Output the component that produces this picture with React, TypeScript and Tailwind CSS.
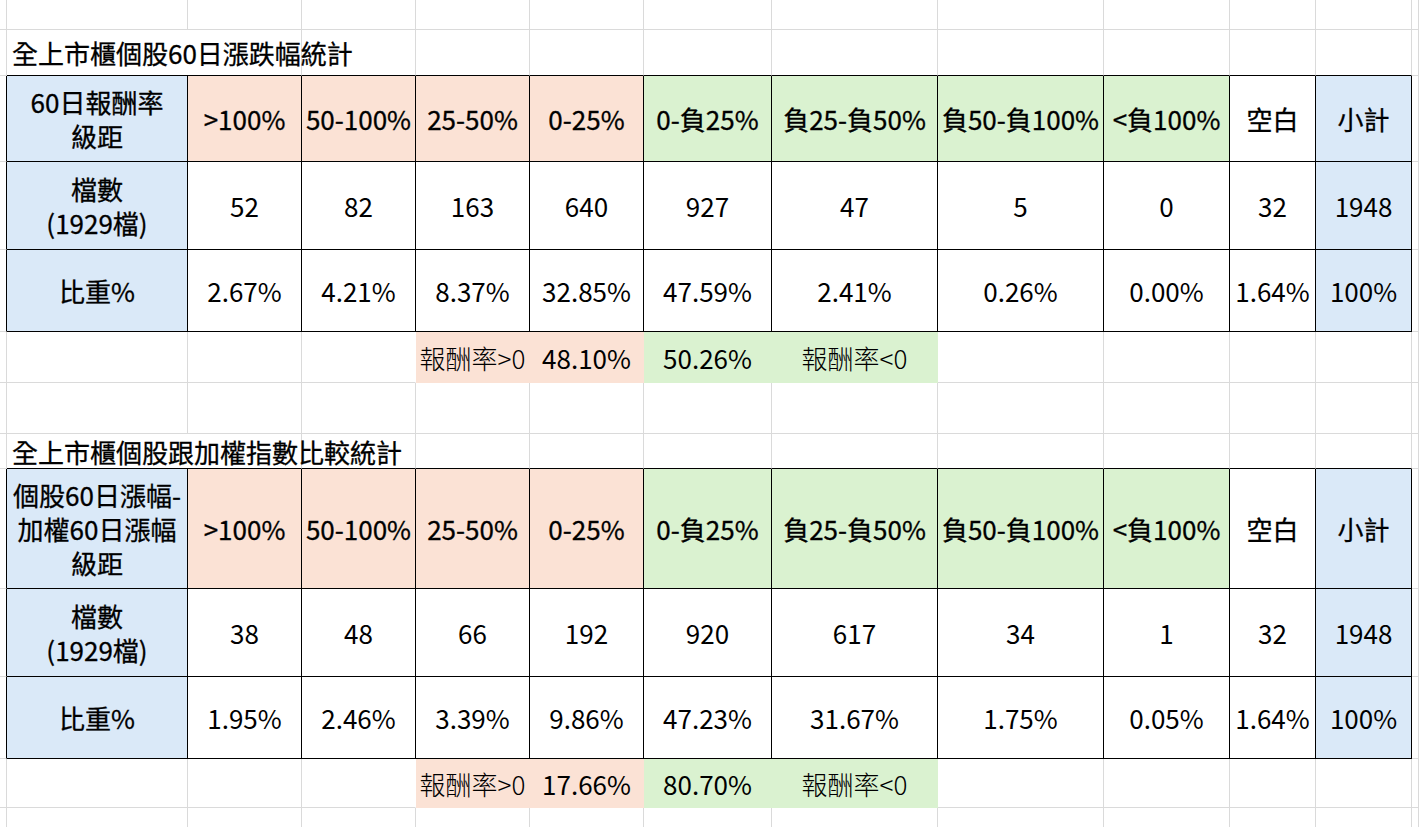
import React from 'react';

const FONT = "font-['Noto_Sans_CJK_TC','Noto_Sans',sans-serif]";

const BLUE = 'bg-[#dae9f8]';
const PEACH = 'bg-[#fbe2d5]';
const GREEN = 'bg-[#daf2d0]';
// Excel-ish semi bold: regular face with a thin stroke
const SEMI = '[-webkit-text-stroke:0.3px_black]';

const headerLabels = ['>100%', '50-100%', '25-50%', '0-25%', '0-負25%', '負25-負50%', '負50-負100%', '<負100%', '空白', '小計'];
const headerFills = [PEACH, PEACH, PEACH, PEACH, GREEN, GREEN, GREEN, GREEN, 'bg-white', BLUE];

type Table = {
  title: string;
  label: string[];
  counts: string[];
  pcts: string[];
  up: string;
  down: string;
};

const tables: Table[] = [
  {
    title: '全上市櫃個股60日漲跌幅統計',
    label: ['60日報酬率', '級距'],
    counts: ['52', '82', '163', '640', '927', '47', '5', '0', '32', '1948'],
    pcts: ['2.67%', '4.21%', '8.37%', '32.85%', '47.59%', '2.41%', '0.26%', '0.00%', '1.64%', '100%'],
    up: '48.10%',
    down: '50.26%',
  },
  {
    title: '全上市櫃個股跟加權指數比較統計',
    label: ['個股60日漲幅-', '加權60日漲幅', '級距'],
    counts: ['38', '48', '66', '192', '920', '617', '34', '1', '32', '1948'],
    pcts: ['1.95%', '2.46%', '3.39%', '9.86%', '47.23%', '31.67%', '1.75%', '0.05%', '1.64%', '100%'],
    up: '17.66%',
    down: '80.70%',
  },
];

function Cell({ className = '', children }: { className?: string; children?: React.ReactNode }) {
  return (
    <div
      className={`flex items-center justify-center whitespace-nowrap text-center border-r border-b ${className}`}
    >
      {children}
    </div>
  );
}

const gray = 'border-[#dadada]';

function BlankRow() {
  return (
    <>
      {Array.from({ length: 13 }).map((_, i) => (
        <Cell key={i} className={gray} />
      ))}
    </>
  );
}

function TitleRow({ title }: { title: string }) {
  return (
    <>
      <Cell className={gray} />
      <div className={`col-span-2 flex items-center whitespace-nowrap border-r border-b border-r-[#dadada] border-b-black pl-[5px] ${SEMI}`}>
        {title}
      </div>
      {Array.from({ length: 9 }).map((_, i) => (
        <Cell key={i} className="border-r-[#dadada] border-b-black" />
      ))}
      <Cell className={gray} />
    </>
  );
}

function TableRow({ label, cells, fills, bold = false }: { label: React.ReactNode; cells: string[]; fills: string[]; bold?: boolean }) {
  return (
    <>
      <Cell className="border-r-black border-b-[#dadada]" />
      <Cell className={`border-black ${BLUE} flex-col leading-[34px] ${SEMI}`}>{label}</Cell>
      {cells.map((c, i) => (
        <Cell key={i} className={`border-black ${fills[i]} ${bold ? SEMI : ''}`}>
          {c}
        </Cell>
      ))}
      <Cell className={gray} />
    </>
  );
}

function SummaryRow({ up, down }: { up: string; down: string }) {
  return (
    <>
      <Cell className={gray} />
      <Cell className={gray} />
      <Cell className={gray} />
      <Cell className="border-r-white border-b-[#dadada]" />
      <Cell className={`border-[#fbe2d5] ${PEACH} font-light text-[26px]`}>報酬率&gt;0</Cell>
      <Cell className={`border-[#fbe2d5] ${PEACH}`}>{up}</Cell>
      <Cell className={`border-[#daf2d0] ${GREEN}`}>{down}</Cell>
      <Cell className={`border-[#daf2d0] ${GREEN} font-light text-[26px]`}>報酬率&lt;0</Cell>
      {Array.from({ length: 5 }).map((_, i) => (
        <Cell key={i} className={gray} />
      ))}
    </>
  );
}

const body = (vals: string[]) => vals.map((_, i) => (i === vals.length - 1 ? BLUE : 'bg-white'));

const countLabel = [<span key="1">檔數</span>, <span key="2">(1929檔)</span>];

export default function App() {
  const [a, b] = tables;
  return (
    <div className={`h-[827px] w-[1419px] overflow-hidden bg-white text-black ${FONT} text-[26px]`}>
      <div className="grid grid-cols-[7px_181px_114px_114px_114px_114px_128px_166px_166px_126px_86px_96px_1fr] grid-rows-[30px_46px_86px_88px_82px_51px_51px_35px_120px_88px_82px_49px_51px]">
        <BlankRow />
        <TitleRow title={a.title} />
        <TableRow label={a.label.map((l) => <span key={l}>{l}</span>)} cells={headerLabels} fills={headerFills} bold />
        <TableRow label={countLabel} cells={a.counts} fills={body(a.counts)} />
        <TableRow label="比重%" cells={a.pcts} fills={body(a.pcts)} />
        <SummaryRow up={a.up} down={a.down} />
        <BlankRow />
        <TitleRow title={b.title} />
        <TableRow label={b.label.map((l) => <span key={l}>{l}</span>)} cells={headerLabels} fills={headerFills} bold />
        <TableRow label={countLabel} cells={b.counts} fills={body(b.counts)} />
        <TableRow label="比重%" cells={b.pcts} fills={body(b.pcts)} />
        <SummaryRow up={b.up} down={b.down} />
        <BlankRow />
      </div>
    </div>
  );
}
